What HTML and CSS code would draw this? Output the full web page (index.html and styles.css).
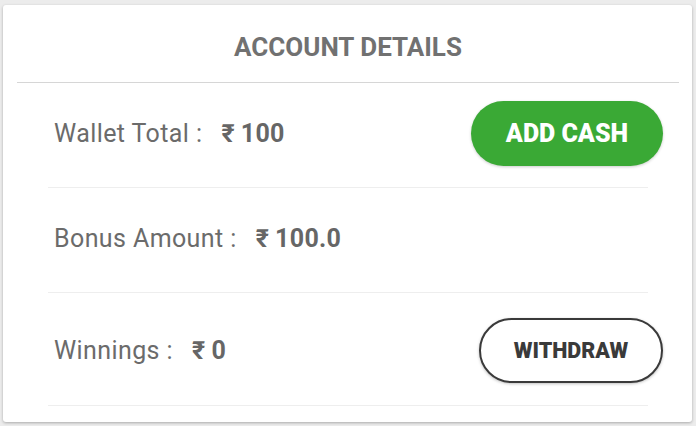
FILE: index.html
```html
<!DOCTYPE html>
<html>
<head>
<meta charset="utf-8">
<link rel="stylesheet" href="styles.css">
</head>
<body>
<div class="card">
  <div class="card-header">ACCOUNT DETAILS</div>
  <div class="rows">
    <div class="row row-1">
      <div class="info"><span class="label">Wallet Total :</span><span class="value"><span class="rupee">₹</span>100</span></div>
      <button class="btn btn-green">ADD CASH</button>
    </div>
    <div class="row row-2">
      <div class="info"><span class="label">Bonus Amount :</span><span class="value"><span class="rupee">₹</span>100.0</span></div>
    </div>
    <div class="row row-3">
      <div class="info"><span class="label">Winnings :</span><span class="value"><span class="rupee">₹</span>0</span></div>
      <button class="btn btn-outline">WITHDRAW</button>
    </div>
  </div>
</div>
</body>
</html>
```
FILE: styles.css
```css
html, body {
  margin: 0;
  padding: 0;
}
body {
  background: #ececec;
  width: 696px;
  height: 426px;
  overflow: hidden;
  font-family: Roboto, "Noto Sans", sans-serif;
}
.card {
  margin: 5px 4px 0 3px;
  height: 417px;
  background: #fff;
  border-radius: 3px;
  box-shadow: 0 1px 3px rgba(0,0,0,0.28);
  box-sizing: border-box;
}
.card-header {
  height: 78px;
  margin: 0 13px 0 14px;
  border-bottom: 1px solid #d6d6d6;
  box-sizing: border-box;
  display: flex;
  align-items: center;
  justify-content: center;
  padding-top: 7px;
  font-weight: 700;
  font-size: 26px;
  color: #717171;
}
.rows {
  margin: 0 44px 0 45px;
}
.row {
  display: flex;
  align-items: center;
  justify-content: space-between;
  border-bottom: 1px solid #eeeeee;
  box-sizing: border-box;
}
.row-1 { height: 105px; padding-bottom: 3px; }
.row-2 { height: 105px; padding-bottom: 3px; }
.row-3 { height: 113px; padding-top: 3px; }
.info {
  padding-left: 6px;
  display: flex;
  align-items: baseline;
  font-size: 25px;
  color: #6b6b6b;
}
.label {
  margin-right: 19px;
  letter-spacing: 0.4px;
}
.value {
  font-weight: 700;
  font-size: 25px;
  color: #666;
  letter-spacing: 0.3px;
}
.rupee {
  margin-right: 6px;
}
.btn {
  margin-right: -15px;
  border-radius: 34px;
  font-family: Roboto, sans-serif;
  font-weight: 900;
  cursor: pointer;
}
.btn-green {
  width: 192px;
  height: 65px;
  background: #3aa935;
  border: none;
  color: #fff;
  font-size: 25px;
  box-shadow: 0 1px 3px rgba(0,0,0,0.2);
}
.btn-outline {
  width: 184px;
  height: 65px;
  background: #fff;
  border: 2px solid #3a3a3a;
  color: #3a3a3a;
  font-size: 21.5px;
  box-shadow: 0 1px 3px rgba(0,0,0,0.25);
}
```
